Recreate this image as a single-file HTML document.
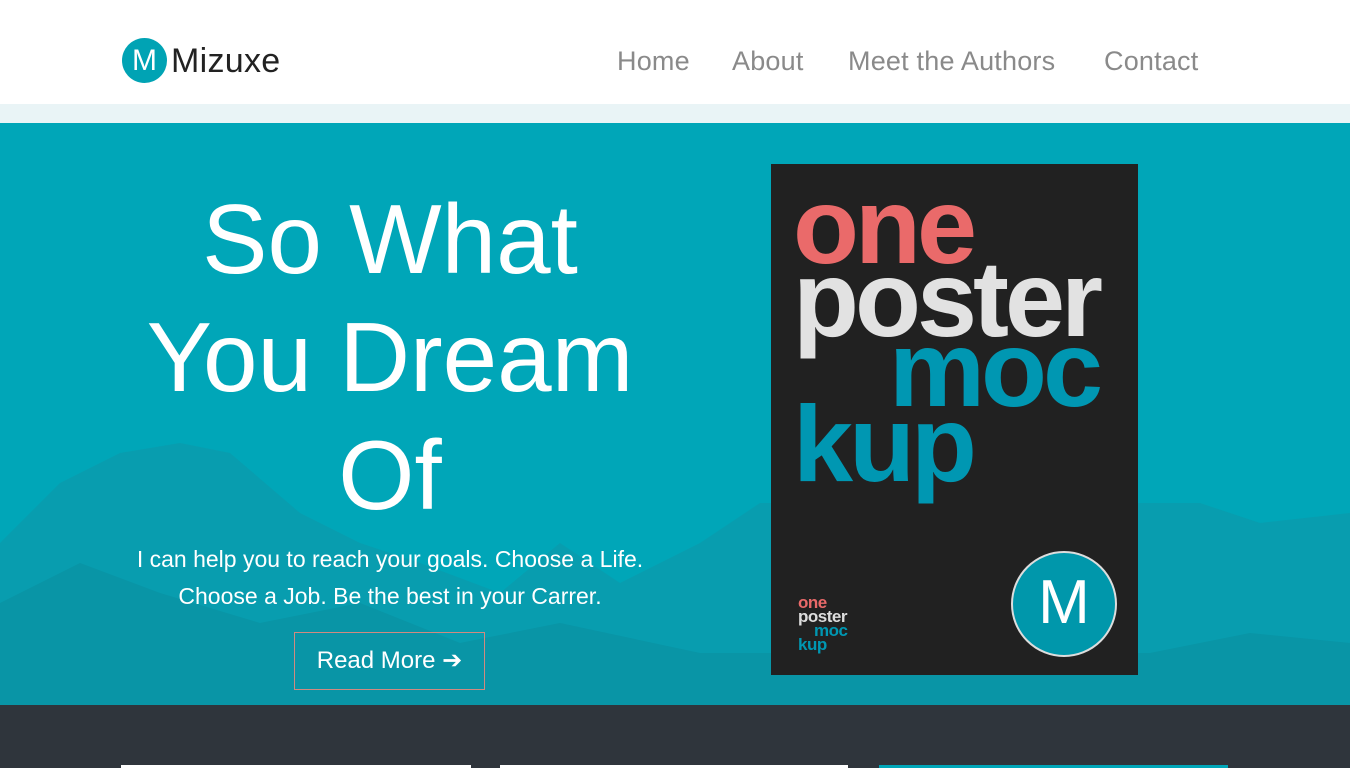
<!DOCTYPE html>
<html><head><style>
*{margin:0;padding:0;box-sizing:border-box}
body{width:1350px;height:768px;overflow:hidden;font-family:"Liberation Sans",sans-serif;background:#fff;position:relative}
.hdr{position:absolute;top:0;left:0;width:1350px;height:104px;background:#fff}
.strip{position:absolute;top:104px;left:0;width:1350px;height:19px;background:#e9f4f6}
.logo{position:absolute;left:122px;top:38px;width:45px;height:45px;border-radius:50%;background:#00a3b4;color:#fff;font-size:30px;text-align:center;line-height:45px;font-weight:300}
.brand{position:absolute;left:171px;top:42px;font-size:34px;color:#222;letter-spacing:.3px}
.nav{position:absolute;top:46px;font-size:27px;color:#8a8a8a;letter-spacing:.2px}
.hero{position:absolute;top:123px;left:0;width:1350px;height:582px;background:#00a6b8;overflow:hidden}
.h1{position:absolute;left:90px;width:600px;top:57px;text-align:center;color:#fff;font-size:98px;line-height:118px;font-weight:300}
.p{position:absolute;left:90px;width:600px;top:418px;text-align:center;color:#fff;font-size:23px;line-height:37px}
.btn{position:absolute;left:294px;top:509px;width:191px;height:58px;border:1px solid #d08a80;color:#fff;font-size:24px;line-height:56px;text-align:center}
.poster{position:absolute;left:771px;top:41px;width:367px;height:511px;background:#212121;font-weight:bold;letter-spacing:-4px}
.poster div{position:absolute;font-size:108px;line-height:100px}
.dark{position:absolute;top:705px;left:0;width:1350px;height:63px;background:#2f353c}
</style></head><body>
<div class="hdr"></div><div class="strip"></div>
<div class="logo">M</div><div class="brand">Mizuxe</div>
<div class="nav" style="left:617px">Home</div>
<div class="nav" style="left:732px">About</div>
<div class="nav" style="left:848px">Meet the Authors</div>
<div class="nav" style="left:1104px">Contact</div>
<div class="hero">
<svg width="1350" height="582" style="position:absolute;left:0;top:0">
<path d="M0 420 L60 360 L120 330 L180 320 L230 330 L300 390 L360 420 L420 440 L500 470 L560 420 L620 460 L700 420 L760 380 L1150 380 L1200 380 L1260 400 L1350 390 L1350 582 L0 582Z" fill="#0c9aab" opacity=".7"/>
<path d="M0 480 L80 440 L160 470 L260 500 L360 480 L460 520 L560 500 L700 530 L1150 530 L1250 510 L1350 520 L1350 582 L0 582Z" fill="#0a8fa0" opacity=".6"/>
</svg>
<div class="h1">So What<br>You Dream<br>Of</div>
<div class="p">I can help you to reach your goals. Choose a Life.<br>Choose a Job. Be the best in your Carrer.</div>
<div class="btn">Read More ➔</div>
<div class="poster">
<div style="left:22px;top:12px;color:#ea6a6a">one</div>
<div style="left:22px;top:85px;color:#e2e2e2">poster</div>
<div style="left:118px;top:155px;color:#0097b2">moc</div>
<div style="left:22px;top:230px;color:#0097b2">kup</div>
<div style="left:27px;top:432px;font-size:17px;line-height:14px;letter-spacing:-.5px"><span style="color:#ea6a6a">one</span><br><span style="color:#ddd">poster</span><br><span style="color:#0097b2;padding-left:16px">moc</span><br><span style="color:#0097b2">kup</span></div>
<div style="left:240px;top:387px;width:106px;height:106px;border-radius:50%;background:#0097ab;border:2px solid #ddd;color:#fff;font-size:62px;line-height:100px;text-align:center;font-weight:300;letter-spacing:0">M</div>
</div>
</div>
<div class="dark"></div>
<div style="position:absolute;top:765px;left:121px;width:350px;height:3px;background:#fff"></div>
<div style="position:absolute;top:765px;left:500px;width:348px;height:3px;background:#fff"></div>
<div style="position:absolute;top:765px;left:879px;width:349px;height:3px;background:#00a6b8"></div>
</body></html>
